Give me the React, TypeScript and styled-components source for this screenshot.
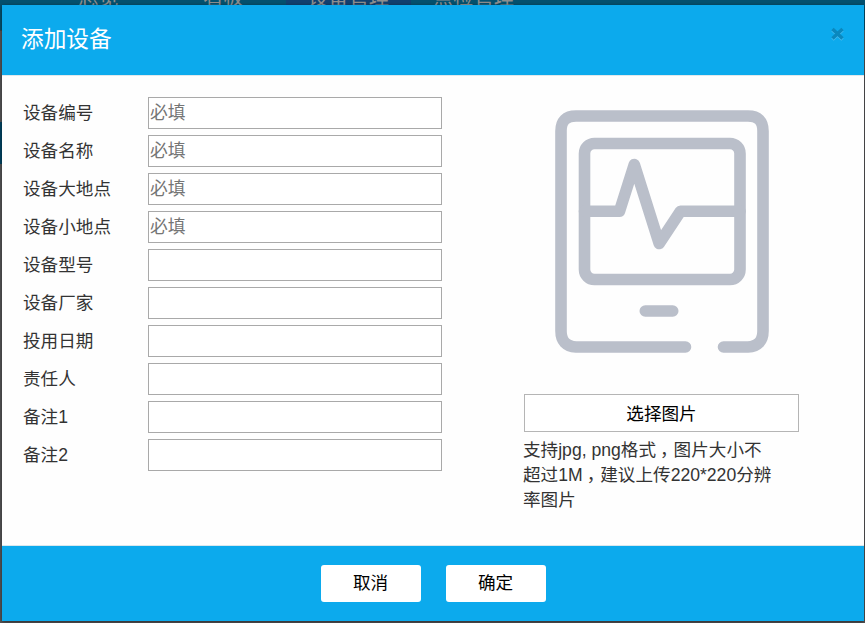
import React from "react";
import styled, { createGlobalStyle } from "styled-components";

const GlobalStyle = createGlobalStyle`
  * { box-sizing: border-box; }
  body {
    margin: 0;
    overflow: hidden;
    color: #333;
    font-family: "Liberation Sans", "Noto Sans CJK SC", sans-serif;
    font-size: 17.6px;
  }
`;

const Page = styled.div`
  position: relative;
  width: 865px;
  height: 623px;
  overflow: hidden;
  background: #555557;
`;

const Nav = styled.nav`
  display: flex;
  height: 30px;
  padding-left: 36px;
  background: #05516f;
`;

const NavItem = styled.span<{ $active?: boolean }>`
  width: 125px;
  height: 30px;
  line-height: 20px;
  text-align: center;
  font-size: 20.3px;
  color: #8f8f8f;
  background: ${(p) => (p.$active ? "#124070" : "transparent")};
  & > span {
    display: block;
    margin-top: -12px;
  }
`;

const SideMenu = styled.div`
  width: 2px;
  padding-top: 91px;
  border-top: 1px solid #444;
`;

const SideActive = styled.div`
  height: 42px;
  background: #004463;
`;

const Dialog = styled.section`
  position: absolute;
  top: 5px;
  left: 2px;
  display: flex;
  flex-direction: column;
  width: 862px;
  height: 616px;
  background: #fefefe;
  box-shadow: 0 1px 4px rgba(0, 0, 0, 0.5);
`;

const Header = styled.header`
  display: flex;
  justify-content: space-between;
  height: 71px;
  padding: 0 20px 0 19px;
  background: #0caaed;
  border-bottom: 1px solid #e0e8ec;
`;

const Title = styled.h1`
  margin: 0;
  font-size: 22.7px;
  font-weight: 400;
  line-height: 69px;
  color: #fff;
`;

const CloseButton = styled.button`
  width: 13px;
  height: 13px;
  margin-top: 22px;
  padding: 0;
  border: 0;
  background: none;
  svg { display: block; }
`;

const Body = styled.div`
  display: flex;
  flex: 1;
  padding: 21px 0 0 21px;
`;

const Form = styled.form`
  display: flex;
  flex-direction: column;
  gap: 6px;
  width: 501px;
`;

const Field = styled.label`
  display: flex;
  height: 32px;
  line-height: 33px;
`;

const Label = styled.span`
  width: 125px;
`;

const Input = styled.input`
  width: 294px;
  height: 32px;
  padding: 2px 1px 1px;
  border: 1px solid #a9a9a9;
  background: #fff;
  font: inherit;
  font-size: 17.8px;
  line-height: normal;
  outline: 0;
  &::placeholder { color: #757575; opacity: 1; }
`;

const Upload = styled.div`
  width: 275px;
`;

const DeviceIcon = styled.svg`
  display: block;
  width: 220px;
  height: 250px;
  margin: 10px 0 0 28px;
`;

const ChooseButton = styled.button`
  display: block;
  width: 275px;
  height: 38px;
  margin-top: 37px;
  padding: 0 0 2px;
  border: 1px solid #b5b5b5;
  background: #fff;
  color: #000;
  font: inherit;
`;

const Hint = styled.p`
  width: 252px;
  margin: 6px 0 0 -1px;
  line-height: 25px;
`;

const Comma = styled.span`
  margin-right: -4px;
  padding-left: 4px;
`;

const Footer = styled.footer`
  display: flex;
  justify-content: center;
  gap: 25px;
  height: 76px;
  padding-top: 19px;
  border-top: 1px solid #d9e7ed;
  background: #0caaed;
`;

const ActionButton = styled.button`
  width: 100px;
  height: 37px;
  padding: 0 0 4px;
  border: 0;
  border-radius: 3px;
  background: #fff;
  color: #000;
  font: inherit;
`;

const fields = [
  { label: "设备编号", required: true },
  { label: "设备名称", required: true },
  { label: "设备大地点", required: true },
  { label: "设备小地点", required: true },
  { label: "设备型号" },
  { label: "设备厂家" },
  { label: "投用日期" },
  { label: "责任人" },
  { label: "备注1" },
  { label: "备注2" },
];

export default function App() {
  return (
    <>
      <GlobalStyle />
      <Page>
        <Nav>
          <NavItem><span>总览</span></NavItem>
          <NavItem><span>看板</span></NavItem>
          <NavItem $active><span>设备管理</span></NavItem>
          <NavItem><span>点检管理</span></NavItem>
        </Nav>
        <SideMenu>
          <SideActive />
        </SideMenu>
        <Dialog role="dialog" aria-label="添加设备">
          <Header>
            <Title>添加设备</Title>
            <CloseButton type="button" aria-label="关闭">
              <svg width="13" height="14" viewBox="0 0 13 14" fill="none">
                <path d="M1.500 3 11.500 12.500M11.500 3 1.500 12.500" stroke="#48bcef" strokeWidth="3.4" />
                <path d="M1.500 2 11.500 11.500M11.500 2 1.500 11.500" stroke="#0a88be" strokeWidth="3.4" />
              </svg>
            </CloseButton>
          </Header>
          <Body>
            <Form>
              {fields.map((f) => (
                <Field key={f.label}>
                  <Label>{f.label}</Label>
                  <Input placeholder={f.required ? "必填" : undefined} />
                </Field>
              ))}
            </Form>
            <Upload>
              <DeviceIcon
                viewBox="552 107 220 250"
                fill="none"
                stroke="#babfca"
                strokeWidth="11.6"
                strokeLinecap="round"
                strokeLinejoin="round"
              >
                <path d="M685.500 347H576Q561 346 561 331V131Q561 116 576 116H748Q763 116 763 131V331Q763 346 748 347H723.500" />
                <rect x="584.500" y="143.500" width="155.500" height="136" rx="10" />
                <path d="M584.500 211.300H619.500L634.300 164.500L659.200 243.500L680.500 211.300H740" />
                <path d="M645.300 311H672.700" />
              </DeviceIcon>
              <ChooseButton type="button">选择图片</ChooseButton>
              <Hint>
                支持jpg, png格式<Comma>，</Comma>图片大小不超过1M<Comma>，</Comma>建议上传220*220分辨率图片
              </Hint>
            </Upload>
          </Body>
          <Footer>
            <ActionButton type="button">取消</ActionButton>
            <ActionButton type="button">确定</ActionButton>
          </Footer>
        </Dialog>
      </Page>
    </>
  );
}
